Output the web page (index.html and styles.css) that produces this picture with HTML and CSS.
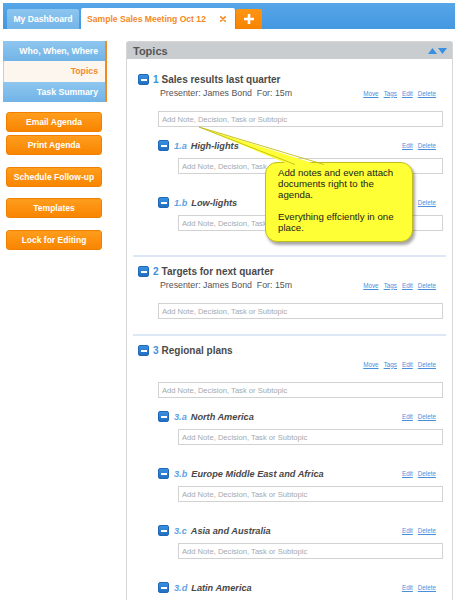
FILE: index.html
```html
<!DOCTYPE html>
<html>
<head>
<meta charset="utf-8">
<link rel="stylesheet" href="styles.css">
</head>
<body>
<div class="topbar">
  <div class="tab tab-dash">My Dashboard</div>
  <div class="tab tab-active"><span>Sample Sales Meeting Oct 12</span>
    <svg class="close" width="6" height="6" viewBox="0 0 6 6"><path d="M0.8 0.8 L5.2 5.2 M5.2 0.8 L0.8 5.2" stroke="#f7902a" stroke-width="1.7" stroke-linecap="round"/></svg>
  </div>
  <div class="tab tab-add"><svg width="12" height="12" viewBox="0 0 12 12"><path d="M6 1 V11 M1 6 H11" stroke="#fff" stroke-width="2.6"/></svg></div>
</div>

<div class="page">
  <aside class="side">
    <nav class="nav">
      <div class="nav-item">Who, When, Where</div>
      <div class="nav-item active">Topics</div>
      <div class="nav-item">Task Summary</div>
    </nav>
    <div class="btns">
      <div class="btn">Email Agenda</div>
      <div class="btn">Print Agenda</div>
      <div class="btn gap">Schedule Follow-up</div>
      <div class="btn gap2">Templates</div>
      <div class="btn gap">Lock for Editing</div>
    </div>
  </aside>

  <main class="panel">
    <div class="panel-head">
      <span class="panel-title">Topics</span>
      <svg width="19" height="6" viewBox="0 0 19 6"><polygon points="0,6 4.5,0 9,6" fill="#3b8fe2"/><polygon points="10,0 19,0 14.5,6" fill="#3b8fe2"/></svg>
    </div>
    <div class="panel-body">
      <section class="topic">
        <div class="topic-head"><span class="icon"></span><span class="num">1</span><span class="title">Sales results last quarter</span></div>
        <div class="meta"><span class="presenter">Presenter: James Bond&nbsp; For: 15m</span><span class="links"><a>Move</a><a>Tags</a><a>Edit</a><a>Delete</a></span></div>
        <input class="field" type="text" placeholder="Add Note, Decision, Task or Subtopic">
        <div class="subs">
          <div class="sub">
            <div class="sub-head"><span class="icon"></span><span class="snum">1.a</span><span class="stitle">High-lights</span><span class="links"><a>Edit</a><a>Delete</a></span></div>
            <input class="field" type="text" placeholder="Add Note, Decision, Task or Subtopic">
          </div>
          <div class="sub">
            <div class="sub-head"><span class="icon"></span><span class="snum">1.b</span><span class="stitle">Low-lights</span><span class="links"><a>Edit</a><a>Delete</a></span></div>
            <input class="field" type="text" placeholder="Add Note, Decision, Task or Subtopic">
          </div>
        </div>
      </section>
      <div class="sep"></div>
      <section class="topic">
        <div class="topic-head"><span class="icon"></span><span class="num">2</span><span class="title">Targets for next quarter</span></div>
        <div class="meta"><span class="presenter">Presenter: James Bond&nbsp; For: 15m</span><span class="links"><a>Move</a><a>Tags</a><a>Edit</a><a>Delete</a></span></div>
        <input class="field" type="text" placeholder="Add Note, Decision, Task or Subtopic">
      </section>
      <div class="sep"></div>
      <section class="topic">
        <div class="topic-head"><span class="icon"></span><span class="num">3</span><span class="title">Regional plans</span></div>
        <div class="meta"><span class="presenter"></span><span class="links"><a>Move</a><a>Tags</a><a>Edit</a><a>Delete</a></span></div>
        <input class="field" type="text" placeholder="Add Note, Decision, Task or Subtopic">
        <div class="subs">
          <div class="sub">
            <div class="sub-head"><span class="icon"></span><span class="snum">3.a</span><span class="stitle">North America</span><span class="links"><a>Edit</a><a>Delete</a></span></div>
            <input class="field" type="text" placeholder="Add Note, Decision, Task or Subtopic">
          </div>
          <div class="sub">
            <div class="sub-head"><span class="icon"></span><span class="snum">3.b</span><span class="stitle">Europe Middle East and Africa</span><span class="links"><a>Edit</a><a>Delete</a></span></div>
            <input class="field" type="text" placeholder="Add Note, Decision, Task or Subtopic">
          </div>
          <div class="sub">
            <div class="sub-head"><span class="icon"></span><span class="snum">3.c</span><span class="stitle">Asia and Australia</span><span class="links"><a>Edit</a><a>Delete</a></span></div>
            <input class="field" type="text" placeholder="Add Note, Decision, Task or Subtopic">
          </div>
          <div class="sub">
            <div class="sub-head"><span class="icon"></span><span class="snum">3.d</span><span class="stitle">Latin America</span><span class="links"><a>Edit</a><a>Delete</a></span></div>
            <input class="field" type="text" placeholder="Add Note, Decision, Task or Subtopic">
          </div>
        </div>
      </section>
    </div>
  </main>
</div>

<div class="callout">
  <p>Add notes and even attach<br>documents right to the<br>agenda.</p>
  <p>Everything effciently in one<br>place.</p>
</div>
<svg class="pointer" width="140" height="50" viewBox="195 120 140 50">
  <polygon points="199,127 295,167 325,167" fill="#ffff36"/>
  <path d="M295,164.5 L199,127 L324,164.5" fill="none" stroke="#c2bb1c" stroke-width="0.9"/>
</svg>
</body>
</html>
```

FILE: styles.css
```css
html, body {
  margin: 0;
  padding: 0;
  height: 600px;
  overflow: hidden;
  background: #fff;
  font-family: "Liberation Sans", Arial, sans-serif;
}

.topbar {
  margin: 3px 0 0 3px;
  height: 26px;
  background: linear-gradient(#56a6e8, #4498e0);
  display: flex;
  align-items: flex-end;
  padding-left: 4px;
}

.tab {
  height: 20px;
  box-sizing: border-box;
  border-radius: 2px 2px 0 0;
  font-size: 8.6px;
  font-weight: bold;
  display: flex;
  align-items: center;
}

.tab-dash {
  width: 72px;
  background: linear-gradient(#8cc5ef, #74b6e8);
  color: #fff;
  justify-content: center;
  margin-right: 2px;
}

.tab-active {
  width: 154px;
  height: 22px;
  margin-bottom: -1px;
  background: #fff;
  color: #f58a25;
  padding-left: 6px;
  justify-content: space-between;
  padding-right: 9px;
}

.close { display: block; }

.tab-add {
  width: 26px;
  margin-left: 1px;
  background: linear-gradient(#ff9413, #f78400);
  justify-content: center;
}

.page {
  display: flex;
  align-items: flex-start;
  margin-top: 12px;
}

.side {
  width: 104px;
  margin-left: 3px;
  flex: none;
}

.nav {
  border-right: 2px solid #f28a1e;
}

.nav-item {
  height: 20px;
  line-height: 20px;
  text-align: right;
  padding-right: 7px;
  font-size: 8.7px;
  font-weight: bold;
  color: #fff;
  background: linear-gradient(#8ec6ef, #72b4e7);
}

.nav-item.active {
  height: 21px;
  line-height: 21px;
  background: #fdf6ee;
  color: #f4892a;
  box-shadow: inset 1px 0 0 #f6c394;
}

.btns {
  margin-top: 10px;
  padding-left: 3px;
}

.btn {
  width: 96px;
  height: 20px;
  box-sizing: border-box;
  border-radius: 3px;
  background: linear-gradient(#ff9d1e, #f88500);
  border: 1px solid #f08000;
  color: #fff;
  font-size: 8.5px;
  font-weight: bold;
  display: flex;
  align-items: center;
  justify-content: center;
  margin-top: 3px;
}
.btn:first-child { margin-top: 0; }
.btn.gap { margin-top: 12px; }
.btn.gap2 { margin-top: 11px; }

.panel {
  margin-left: 19px;
  width: 327px;
  box-sizing: border-box;
  border: 1px solid #d4d6d8;
  border-bottom: none;
  border-radius: 3px 3px 0 0;
  min-height: 600px;
  flex: none;
}

.panel-head {
  height: 17px;
  background: #c9cdd0;
  display: flex;
  align-items: center;
  justify-content: space-between;
  padding: 0 5px 0 6px;
}

.panel-title {
  font-size: 11px;
  font-weight: bold;
  color: #555;
}

.panel-head svg { display: block; }

.panel-body {
  padding-top: 15px;
}

.topic {
  padding: 0 9px 15px 11px;
}

.topic-head, .sub-head {
  display: flex;
  align-items: center;
  height: 11px;
}

.icon {
  width: 11px;
  height: 11px;
  box-sizing: border-box;
  border-radius: 2px;
  background: linear-gradient(#3a8fe0, #226fc2);
  border: 1px solid #1f68b6;
  flex: none;
  display: flex;
  align-items: center;
  justify-content: center;
}
.icon::after {
  content: "";
  width: 6px;
  height: 2px;
  background: #fff;
}

.num {
  color: #3d8fdc;
  font-weight: bold;
  font-size: 10px;
  margin-left: 4px;
}

.title {
  color: #4a4a4a;
  font-weight: bold;
  font-size: 10px;
  margin-left: 3px;
}

.snum {
  color: #5ea2e4;
  font-weight: bold;
  font-style: italic;
  font-size: 9.2px;
  margin-left: 5px;
}

.stitle {
  color: #484848;
  font-weight: bold;
  font-style: italic;
  font-size: 9.2px;
  margin-left: 4px;
}

.meta {
  display: flex;
  justify-content: space-between;
  align-items: center;
  height: 10px;
  margin-top: 3px;
  padding: 0 7px 0 22px;
}

.presenter {
  font-size: 8.8px;
  color: #555;
}

.links {
  display: flex;
  margin-left: auto;
  padding-right: 7px;
}
.meta .links { padding-right: 0; }

.links a {
  font-size: 6.3px;
  color: #4a8fdc;
  text-decoration: underline;
  margin-left: 5px;
}

.field {
  display: block;
  box-sizing: border-box;
  width: calc(100% - 20px);
  margin: 13px 0 0 20px;
  height: 16px;
  border: 1px solid #d2d2d2;
  padding: 0 3px;
  font-family: "Liberation Sans", Arial, sans-serif;
  font-size: 7.6px;
  color: #555;
  outline: none;
  background: #fff;
}
.field::placeholder { color: #a8a8a8; }

.subs {
  margin: 0 0 9px 20px;
  padding-top: 13px;
}

.sub + .sub { margin-top: 23px; }

.sub .field { margin-top: 7px; }

.sep {
  height: 2px;
  background: #dce8f5;
  margin: 0 6px 9px;
}

.callout {
  position: absolute;
  left: 265px;
  top: 162px;
  width: 148px;
  height: 80px;
  box-sizing: border-box;
  background: #ffff36;
  border: 1px solid #c2bb1c;
  border-radius: 12px;
  box-shadow: 2px 3px 3px rgba(0, 0, 0, 0.35);
  padding: 4px 0 0 12px;
  font-family: "Liberation Sans", Arial, sans-serif;
  font-size: 9.7px;
  line-height: 11px;
  color: #1a1a1a;
}
.callout p { margin: 0 0 11px; }

.pointer {
  position: absolute;
  left: 195px;
  top: 120px;
}
```
